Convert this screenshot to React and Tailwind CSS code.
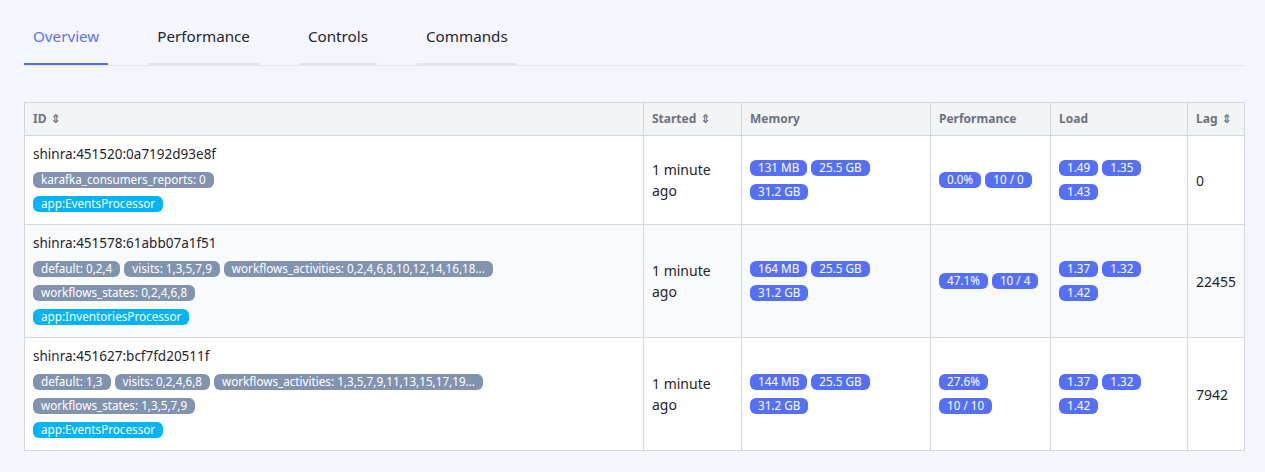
import React from "react";

const font = { fontFamily: '"Noto Sans", "DejaVu Sans", sans-serif' };

function Badge({ children, kind = "gray" }) {
  const color =
    kind === "gray"
      ? "bg-[#8293b0]"
      : kind === "cyan"
      ? "bg-[#00b4f7]"
      : "bg-[#5570f6]";
  return (
    <span
      className={`${color} inline-flex h-4 items-center whitespace-nowrap rounded-[6px] px-2 text-[11.7px] leading-none text-white`}
    >
      {children}
    </span>
  );
}

function BadgeLines({ lines }) {
  return (
    <div className="flex flex-col gap-2">
      {lines.map((line, i) => (
        <div key={i} className="flex gap-1">
          {line.map((b, j) => (
            <Badge key={j} kind="blue">
              {b}
            </Badge>
          ))}
        </div>
      ))}
    </div>
  );
}

const rows = [
  {
    id: "shinra:451520:0a7192d93e8f",
    tags: [["karafka_consumers_reports: 0"]],
    app: "app:EventsProcessor",
    memory: [["131 MB", "25.5 GB"], ["31.2 GB"]],
    perf: [["0.0%", "10 / 0"]],
    load: [["1.49", "1.35"], ["1.43"]],
    lag: "0",
    bg: "bg-white",
  },
  {
    id: "shinra:451578:61abb07a1f51",
    tags: [
      ["default: 0,2,4", "visits: 1,3,5,7,9", "workflows_activities: 0,2,4,6,8,10,12,14,16,18..."],
      ["workflows_states: 0,2,4,6,8"],
    ],
    app: "app:InventoriesProcessor",
    memory: [["164 MB", "25.5 GB"], ["31.2 GB"]],
    perf: [["47.1%", "10 / 4"]],
    load: [["1.37", "1.32"], ["1.42"]],
    lag: "22455",
    bg: "bg-[#f9fafb]",
  },
  {
    id: "shinra:451627:bcf7fd20511f",
    tags: [
      ["default: 1,3", "visits: 0,2,4,6,8", "workflows_activities: 1,3,5,7,9,11,13,15,17,19..."],
      ["workflows_states: 1,3,5,7,9"],
    ],
    app: "app:EventsProcessor",
    memory: [["144 MB", "25.5 GB"], ["31.2 GB"]],
    perf: [["27.6%"], ["10 / 10"]],
    load: [["1.37", "1.32"], ["1.42"]],
    lag: "7942",
    bg: "bg-white",
  },
];

function Th({ children, w, sort }) {
  return (
    <th
      className={`${w} h-[33px] border border-[#d4d6de] bg-[#f3f4f6] px-2 text-left align-middle text-[12px] font-bold text-[#6b7280]`}
    >
      {children}
      {sort && <span className="ml-1 text-[12px] font-bold">⇕</span>}
    </th>
  );
}

export default function App() {
  const tabs = ["Overview", "Performance", "Controls", "Commands"];
  return (
    <div className="min-h-screen bg-[#f5f6fd] pl-6 text-[#1f2430]" style={font}>
      <div className="w-[1220px]">
        <div className="flex gap-10 border-b border-[#e5e7eb]">
          {tabs.map((t, i) => (
            <div
              key={t}
              className={`border-b-2 px-[9px] pt-[24px] pb-[15px] text-[15.2px] leading-6 ${
                i === 0 ? "border-[#4f6ef7] text-[#5b73f5]" : "border-[#e5e7eb] text-[#1f2430]"
              }`}
            >
              {t}
            </div>
          ))}
        </div>

        <table className="mt-9 w-[1220px] table-fixed border-collapse">
          <thead>
            <tr>
              <Th w="w-[619px]" sort>ID</Th>
              <Th w="w-[98px]" sort>Started</Th>
              <Th w="w-[189px]">Memory</Th>
              <Th w="w-[120px]">Performance</Th>
              <Th w="w-[137px]">Load</Th>
              <Th w="w-[57px]" sort>Lag</Th>
            </tr>
          </thead>
          <tbody>
            {rows.map((r) => (
              <tr key={r.id} className={r.bg}>
                <td className="border border-[#d4d6de] px-2 pt-2 pb-3 align-top">
                  <div className="text-[13.5px] leading-5">{r.id}</div>
                  <div className="mt-2 flex flex-col gap-2">
                    {r.tags.map((line, i) => (
                      <div key={i} className="flex gap-1">
                        {line.map((t) => (
                          <Badge key={t}>{t}</Badge>
                        ))}
                      </div>
                    ))}
                    <div className="flex">
                      <Badge kind="cyan">{r.app}</Badge>
                    </div>
                  </div>
                </td>
                <td className="border border-[#d4d6de] px-2 align-middle text-[14px] leading-[21px]">
                  1 minute
                  <br />
                  ago
                </td>
                <td className="border border-[#d4d6de] px-2 align-middle">
                  <BadgeLines lines={r.memory} />
                </td>
                <td className="border border-[#d4d6de] px-2 align-middle">
                  <BadgeLines lines={r.perf} />
                </td>
                <td className="border border-[#d4d6de] px-2 align-middle">
                  <BadgeLines lines={r.load} />
                </td>
                <td className="border border-[#d4d6de] px-2 align-middle text-[14px]">{r.lag}</td>
              </tr>
            ))}
          </tbody>
        </table>
      </div>
    </div>
  );
}
